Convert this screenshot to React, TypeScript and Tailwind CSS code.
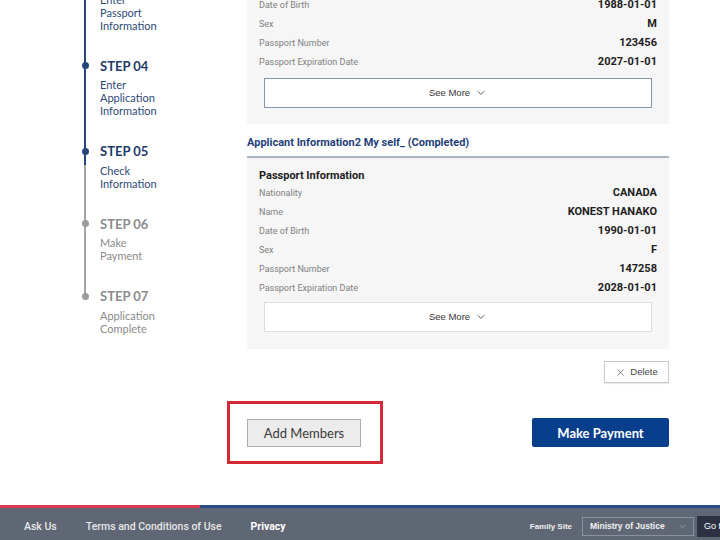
import React from 'react';
import { ChevronDown, X } from 'lucide-react';

const steps = [
  { no: '03', lines: ['Enter', 'Passport', 'Information'], state: 'done' },
  { no: '04', lines: ['Enter', 'Application', 'Information'], state: 'done' },
  { no: '05', lines: ['Check', 'Information'], state: 'current' },
  { no: '06', lines: ['Make', 'Payment'], state: 'todo' },
  { no: '07', lines: ['Application', 'Complete'], state: 'todo' },
];

const card1 = [
  { label: 'Date of Birth', value: '1988-01-01' },
  { label: 'Sex', value: 'M' },
  { label: 'Passport Number', value: '123456' },
  { label: 'Passport Expiration Date', value: '2027-01-01' },
];

const card2 = [
  { label: 'Nationality', value: 'CANADA' },
  { label: 'Name', value: 'KONEST HANAKO' },
  { label: 'Date of Birth', value: '1990-01-01' },
  { label: 'Sex', value: 'F' },
  { label: 'Passport Number', value: '147258' },
  { label: 'Passport Expiration Date', value: '2028-01-01' },
];

const sans = "font-['Lato','Noto_Sans',sans-serif]";
const roboto = "font-['Roboto',sans-serif]";
const arial = "font-['Liberation_Sans',Arial,sans-serif]";

const Row: React.FC<{ label: string; value: string }> = ({ label, value }) => (
  <div className={`flex h-[19px] items-center justify-between ${roboto}`}>
    <span className="text-[9px] text-[#808080]">{label}</span>
    <span className="text-[11px] font-bold text-[#1d1d1d]">{value}</span>
  </div>
);

const SeeMore: React.FC<{ focused?: boolean }> = ({ focused }) => (
  <div
    className={`mx-[5px] flex h-[30px] items-center justify-center gap-[5px] bg-white border ${
      focused ? 'mt-[6px] border-[#8796a8]' : 'mt-[4px] border-[#dedede]'
    } ${arial} text-[9.5px] text-[#333]`}
  >
    See More
    <ChevronDown size={12} strokeWidth={1.6} className="text-[#333]" />
  </div>
);

export default function App() {
  return (
    <div className="relative h-[540px] w-[720px] overflow-hidden bg-white">
      <div className="flex items-start pl-[78px]">
        {/* step sidebar */}
        <div className={`-mt-[28px] w-[169px] shrink-0 ${sans}`}>
          {steps.map((s, i) => {
            const on = s.state !== 'todo';
            const last = i === steps.length - 1;
            return (
              <div key={s.no} className={`relative pl-[22px] ${last ? '' : 'mb-[26px]'}`}>
                {!last && (
                  <div
                    className={`absolute left-[6.25px] top-[8px] bottom-[-34px] w-[1.5px] ${
                      s.state === 'done'
                        ? 'bg-[#24467c]'
                        : s.state === 'current'
                        ? 'bg-[linear-gradient(to_bottom,#24467c_14px,#a3a3a3_14px)]'
                        : 'bg-[#a3a3a3]'
                    }`}
                  />
                )}
                <div
                  className={`absolute left-[3.5px] top-[4.5px] h-[7px] w-[7px] rounded-full ${
                    on ? 'bg-[#24467c]' : 'bg-[#9b9b9b]'
                  }`}
                />
                <div className={`text-[13px] font-bold leading-[16px] ${on ? 'text-[#1f3a68]' : 'text-[#8c8c8c]'}`}>
                  STEP {s.no}
                </div>
                <div className={`mt-[4.5px] text-[11px] leading-[13px] ${on ? 'text-[#2d4a76]' : 'text-[#8a8a8a]'}`}>
                  {s.lines.map((l) => (
                    <div key={l}>{l}</div>
                  ))}
                </div>
              </div>
            );
          })}
        </div>

        {/* applicants */}
        <div className="-mt-[4px] w-[422px] shrink-0">
          <div className="bg-[#f6f6f6] px-[12px] pb-[16px]">
            {card1.map((r) => (
              <Row key={r.label} {...r} />
            ))}
            <SeeMore focused />
          </div>

          <div
            className={`mt-[11px] border-b-2 border-[#a9b4c2] pb-[5px] text-[11px] font-bold leading-[16px] text-[#1f3f7a] ${roboto}`}
          >
            Applicant Information2 My self_ (Completed)
          </div>

          <div className="bg-[#f6f6f6] px-[12px] pt-[9px] pb-[17px]">
            <div className={`text-[11px] font-bold leading-[17px] text-[#1d1d1d] ${roboto}`}>Passport Information</div>
            {card2.map((r) => (
              <Row key={r.label} {...r} />
            ))}
            <SeeMore />
          </div>

          <div className="mt-[12px] flex justify-end">
            <button
              className={`flex h-[22px] w-[65px] items-center justify-center gap-[4px] border border-[#c9c9c9] bg-white shadow-[0_1px_1px_rgba(0,0,0,0.08)] ${arial} text-[9.5px] text-[#444]`}
            >
              <X size={11} strokeWidth={1.5} />
              Delete
            </button>
          </div>

          <div className="mt-[18px] flex items-center justify-between">
            <div className="-ml-[20px] border-[3px] border-[#d42a36] pt-[15px] pb-[14px] pl-[17px] pr-[19px]">
              <button
                className={`flex h-[28px] w-[114px] items-center justify-center border border-[#acacac] bg-[#ececec] pt-[2px] text-[13px] text-[#3a3a3a] ${sans}`}
              >
                Add Members
              </button>
            </div>
            <button
              className={`flex h-[29px] w-[137px] items-center justify-center rounded-[2px] bg-[#083f8d] pt-[2px] text-[13px] font-bold text-white ${sans}`}
            >
              Make Payment
            </button>
          </div>
        </div>
      </div>

      {/* footer */}
      <div className="mt-[41px]">
        <div className="flex h-[3px]">
          <div className="w-[200px] bg-[#dc3a4c]" />
          <div className="flex-1 bg-[#284c8a]" />
        </div>
        <div className="flex h-[37px] items-center bg-[#5f6674] pl-[24px]">
          <div className={`flex gap-[29px] whitespace-nowrap text-[10.5px] font-medium ${roboto}`}>
            <span className="text-[#e8e8e8]">Ask Us</span>
            <span className="text-[#e8e8e8]">Terms and Conditions of Use</span>
            <span className="font-bold text-white">Privacy</span>
          </div>
          <div className={`-mr-[17px] ml-auto flex items-center whitespace-nowrap ${arial}`}>
            <span className="mr-[10px] text-[8px] font-bold text-[#f0f0f0]">Family Site</span>
            <div className="flex h-[19px] w-[112px] items-center justify-between border border-[#8a909c] pl-[7px] pr-[5px]">
              <span className="text-[8.5px] font-bold text-[#f4f4f4]">Ministry of Justice</span>
              <ChevronDown size={11} strokeWidth={1.5} className="text-[#a9adb5]" />
            </div>
            <div className="ml-[3px] flex h-[21px] w-[40px] items-center bg-[#2c3241] pl-[7px] text-[9px] text-white">
              Go to
            </div>
          </div>
        </div>
      </div>
    </div>
  );
}
